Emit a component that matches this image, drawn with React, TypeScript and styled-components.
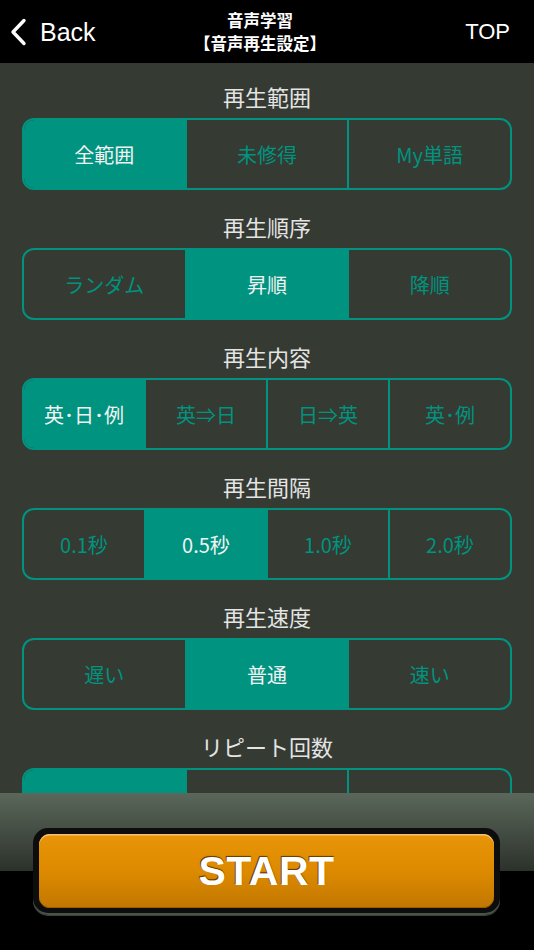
import styled, { createGlobalStyle } from "styled-components"

const GlobalStyle = createGlobalStyle`
  html, body {
    margin: 0;
    padding: 0;
    background: #000;
  }
  body {
    font-family: "Liberation Sans", "Noto Sans CJK JP", sans-serif;
  }
`

type Setting = {
  title: string
  options: string[]
  selected: number
}

const settings: Setting[] = [
  { title: '再生範囲', options: ['全範囲', '未修得', 'My単語'], selected: 0 },
  { title: '再生順序', options: ['ランダム', '昇順', '降順'], selected: 1 },
  { title: '再生内容', options: ['英･日･例', '英⇒日', '日⇒英', '英･例'], selected: 0 },
  { title: '再生間隔', options: ['0.1秒', '0.5秒', '1.0秒', '2.0秒'], selected: 1 },
  { title: '再生速度', options: ['遅い', '普通', '速い'], selected: 1 },
  { title: 'リピート回数', options: ['1回', '2回', '3回'], selected: 0 },
]

export default function App() {
  return <Page>
    <GlobalStyle />
    <NavBar>
      <BackButton>
        <svg width="18" height="28" viewBox="0 0 18 28">
          <path d="M14 2.5 L3 14 L14 25.5" fill="none" stroke="#fff" strokeWidth="3.4" strokeLinecap="round" strokeLinejoin="round" />
        </svg>
        <span>Back</span>
      </BackButton>
      <NavTitle>音声学習<br />【音声再生設定】</NavTitle>
      <TopLink>TOP</TopLink>
    </NavBar>
    <Content>
      {settings.map(s => (
        <Section key={s.title}>
          <SectionTitle>{s.title}</SectionTitle>
          <Segmented>
            {s.options.map((o, i) => (
              <Segment key={o} active={i === s.selected}>{o}</Segment>
            ))}
          </Segmented>
        </Section>
      ))}
    </Content>
    <Footer>
      <StartRim>
        <StartButton>START</StartButton>
      </StartRim>
    </Footer>
  </Page>
}

const teal = '#00937f'

const Page = styled.div`
  width: 534px;
  height: 950px;
  display: flex;
  flex-direction: column;
  background: #353a33;
  overflow: hidden;
`

const NavBar = styled.div`
  height: 63px;
  flex-shrink: 0;
  background: #000;
  display: flex;
  align-items: center;
  justify-content: space-between;
  padding: 0 24px 0 10px;
  color: #fff;
`

const BackButton = styled.div`
  display: flex;
  align-items: center;
  gap: 12px;
  font-size: 25px;
  width: 120px;
  span {
    margin-top: 1px;
  }
`

const NavTitle = styled.div`
  font-family: "Noto Sans CJK JP", sans-serif;
  font-weight: bold;
  font-size: 16.5px;
  line-height: 23px;
  text-align: center;
  margin-top: 1px;
`

const TopLink = styled.div`
  width: 120px;
  text-align: right;
  font-size: 22px;
`

const Content = styled.div`
  flex: 1;
  overflow: hidden;
  padding: 18px 22px 0;
  display: flex;
  flex-direction: column;
  gap: 21px;
`

const Section = styled.div`
  display: flex;
  flex-direction: column;
  gap: 7px;
`

const SectionTitle = styled.div`
  font-family: "Noto Sans CJK JP", sans-serif;
  font-size: 22px;
  line-height: 30px;
  height: 30px;
  color: #e4e4e4;
  text-align: center;
`

const Segmented = styled.div`
  display: flex;
  height: 72px;
  box-sizing: border-box;
  border: 2px solid ${teal};
  border-radius: 12px;
  overflow: hidden;
  flex-shrink: 0;
`

const Segment = styled.div<{ active: boolean }>`
  flex: 1;
  display: flex;
  align-items: center;
  justify-content: center;
  font-family: "Noto Sans CJK JP", sans-serif;
  font-size: 20px;
  color: ${({ active }) => active ? '#f2f2f2' : teal};
  background: ${({ active }) => active ? '#009480' : 'transparent'};
  & + & {
    border-left: 2px solid ${teal};
  }
`

const Footer = styled.div`
  height: 157px;
  flex-shrink: 0;
  background: linear-gradient(#5b675a 0, #2c322b 78px, #000 78px);
  display: flex;
  align-items: center;
  justify-content: center;
  position: relative;
  z-index: 1;
`

const StartRim = styled.div`
  width: 467px;
  height: 87px;
  margin-left: -1px;
  box-sizing: border-box;
  padding: 6px 6px 7px;
  border-radius: 15px;
  background: #0d0d0d;
  box-shadow: inset 0 -2px 0 #4a5348, 0 1px 0 #3c4439;
`

const StartButton = styled.div`
  height: 100%;
  border-radius: 11px;
  background: linear-gradient(#e89508, #dd8a00 50%, #c17700);
  box-shadow: inset 0 1.5px 0 #f6c27a, inset 0 -1px 0 #9a5e00;
  display: flex;
  align-items: center;
  justify-content: center;
  font-family: "Liberation Sans", Arial, sans-serif;
  font-weight: bold;
  font-size: 41px;
  color: #fff;
  letter-spacing: 0.5px;
  text-shadow: -1px -1.5px 0 #6a4200, 0 -1px 1px #5a3800;
`
